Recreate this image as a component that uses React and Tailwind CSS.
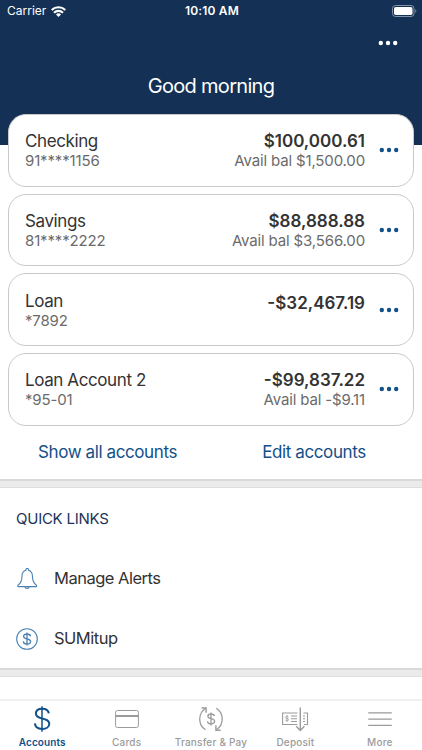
import React, { useState } from "react";

const accounts = [
  { name: "Checking", number: "91****1156", balance: "$100,000.61", avail: "Avail bal $1,500.00" },
  { name: "Savings", number: "81****2222", balance: "$88,888.88", avail: "Avail bal $3,566.00" },
  { name: "Loan", number: "*7892", balance: "-$32,467.19" },
  { name: "Loan Account 2", number: "*95-01", balance: "-$99,837.22", avail: "Avail bal -$9.11" },
];

const App = () => {
  const [activeTab, setActiveTab] = useState("Accounts");

  const tabs = [
    { label: "Accounts", icon: <DollarIcon /> },
    { label: "Cards", icon: <CardIcon /> },
    { label: "Transfer & Pay", icon: <TransferIcon /> },
    { label: "Deposit", icon: <DepositIcon /> },
    { label: "More", icon: <MenuIcon /> },
  ];

  return (
    <div className="flex h-[750px] w-[422px] flex-col overflow-hidden bg-white font-[Inter,sans-serif] text-[#333333]">
      <header className="h-[145px] shrink-0 bg-[#143055] text-white">
        <StatusBar />
        <div className="flex h-[42px] items-center justify-end pr-[24.5px]">
          <Dots />
        </div>
        <h1 className="text-center text-[20px] leading-[44px] tracking-[-0.7px]">
          Good morning
        </h1>
      </header>

      <main className="-mt-[31px] min-h-0 flex-1 overflow-hidden">
        <div className="flex flex-col gap-[7.2px] px-2">
          {accounts.map((account) => (
            <AccountCard key={account.name} {...account} />
          ))}
        </div>

        <div className="flex h-[53px] items-center pt-0.5 text-[17px] tracking-[-0.4px] text-[#125089]">
          <button className="w-[215px]">Show all accounts</button>
          <button className="w-[198px]">Edit accounts</button>
        </div>

        <Divider />

        <section className="h-[180px] pt-4">
          <h2 className="mb-[15px] px-4 text-[15px] leading-[30px] tracking-[-0.25px] text-[#1c3557]">
            QUICK LINKS
          </h2>
          <QuickLink icon={<BellIcon />} label="Manage Alerts" />
          <QuickLink icon={<CoinIcon />} label="SUMitup" />
        </section>

        <Divider />
      </main>

      <nav className="flex h-[51px] shrink-0 border-t-2 border-[#f1f1f1] bg-white">
        {tabs.map((tab) => (
          <button
            key={tab.label}
            onClick={() => setActiveTab(tab.label)}
            className={`flex flex-1 flex-col items-center whitespace-nowrap pt-[3px] text-[10px] ${
              activeTab === tab.label
                ? "font-semibold tracking-[0.1px] text-[#125089]"
                : "font-medium tracking-[0.2px] text-[#9b9b9b]"
            }`}
          >
            {tab.icon}
            <span className="mt-px leading-[14px]">{tab.label}</span>
          </button>
        ))}
      </nav>
    </div>
  );
};

const StatusBar = () => (
  <div className="grid h-[22px] grid-cols-3 items-center pr-[5px] pl-[7px] text-[12px]">
    <div className="flex items-center gap-[5px]">
      <span>Carrier</span>
      <svg width="15" height="11" viewBox="0 0 15 11" fill="none" stroke="currentColor" strokeWidth="2.1">
        <path d="M0.7 4a9.7 9.7 0 0 1 13.6 0" />
        <path d="M3 6.7a6.4 6.4 0 0 1 9 0" />
        <path d="M7.5 11 5 8.5a3.6 3.6 0 0 1 5 0z" fill="currentColor" stroke="none" />
      </svg>
    </div>
    <span className="text-center font-semibold tracking-[0.15px]">10:10 AM</span>
    <svg className="justify-self-end" width="25" height="12" viewBox="0 0 25 12" fill="none">
      <rect x="0.5" y="0.5" width="21.5" height="11" rx="3" stroke="#8493a8" />
      <rect x="2" y="2" width="18.5" height="8" rx="1.7" fill="white" />
      <path d="M23.3 4.2v3.6c1.4-.7 1.4-2.9 0-3.6z" fill="#8493a8" />
    </svg>
  </div>
);

const Dots = () => (
  <svg width="20" height="6" viewBox="0 0 20 6" fill="currentColor">
    <circle cx="2.8" cy="3" r="2.2" />
    <circle cx="10" cy="3" r="2.2" />
    <circle cx="17.2" cy="3" r="2.2" />
  </svg>
);

const AccountCard = ({ name, number, balance, avail }) => (
  <div className="flex h-[72.5px] items-center rounded-[18px] border border-[#c9c9c9] bg-white pr-3.5 pl-4">
    <div className="flex-1 pt-px">
      <div className="text-[17px] leading-5 tracking-[-0.4px]">{name}</div>
      <div className="text-[15px] leading-[19px] tracking-[-0.15px] text-[#6b6b6b]">{number}</div>
    </div>
    <div className={`pt-px text-right ${avail ? "" : "pb-3.5"}`}>
      <div className="text-[17px] leading-5 font-semibold">{balance}</div>
      {avail && (
        <div className="text-[15px] leading-[19px] tracking-[-0.15px] text-[#6b6b6b]">{avail}</div>
      )}
    </div>
    <button className="ml-[14px] text-[#125089]">
      <Dots />
    </button>
  </div>
);

const Divider = () => (
  <div className="h-[9px] border-t-2 border-b border-t-[#d9d9d9] border-b-[#dedede] bg-[#ebebeb]" />
);

const QuickLink = ({ icon, label }) => (
  <button className="flex h-[60px] w-full items-center gap-4 pl-4 text-left text-[16.5px] tracking-[-0.5px]">
    {icon}
    <span>{label}</span>
  </button>
);

const BellIcon = () => (
  <svg width="22" height="22" viewBox="0 0 22 22" fill="none" stroke="#4a82b4" strokeWidth="1.1" strokeLinejoin="round">
    <path d="M10 2.2a1.3 1.3 0 1 1 2.4 0c2.8.8 4 3 4 5.8 0 5 .8 7.2 4.1 9.3v1.3H1.9v-1.3C5.2 15.2 6 13 6 8c0-2.8 1.200-5 4-5.800z" />
    <path d="M9 18.6c.2 2.4 4.1 2.4 4.3 0" />
  </svg>
);

const CoinIcon = () => (
  <svg width="22" height="22" viewBox="0 0 22 22" fill="none" stroke="#4a82b4" strokeWidth="1.1">
    <circle cx="11" cy="11" r="10.3" />
    <path d="M11 4.4v13.2M14.500 8.300c-.2-1.500-1.500-2.300-3.500-2.300s-3.400.9-3.400 2.400c0 1.600 1.600 2 3.400 2.500 2 .5 3.600.9 3.600 2.600 0 1.500-1.600 2.500-3.600 2.500s-3.600-.9-3.700-2.600" strokeWidth="1.3" />
  </svg>
);

const DollarIcon = () => (
  <svg width="28" height="30" viewBox="0 0 28 30" fill="none" stroke="currentColor" strokeWidth="2">
    <path d="M14 2.3v25.4" strokeWidth="1.5" />
    <path d="M20.8 9.4c-.3-3-3-4.700-6.600-4.700-3.700 0-6.300 1.800-6.300 4.800 0 3.300 3 4.200 6.200 4.900 3.800.9 7.200 1.800 7.200 5.300 0 3.200-3 5.200-7 5.200s-7.200-1.900-7.400-5.500" />
  </svg>
);

const CardIcon = () => (
  <svg width="28" height="30" viewBox="0 0 28 30" fill="none" stroke="currentColor">
    <rect x="2.6" y="6.5" width="22.8" height="17" rx="1.8" />
    <path d="M2.6 12h22.8" strokeWidth="2" />
  </svg>
);

const TransferIcon = () => (
  <svg width="28" height="30" viewBox="0 0 28 30" fill="none" stroke="currentColor" strokeWidth="1.3">
    <path d="M8.5 25.8A12.7 12.7 0 0 1 8.8 4.3M19.2 4.200A12.700 12.700 0 0 1 19.300 25.700" />
    <path d="M4.500 4h4.600v4.800M23.700 26.200h-4.800v-5" strokeWidth="1.4" />
    <path d="M14 8.500v13M17.400 12.200c-.2-1.500-1.400-2.200-3.400-2.200-1.900 0-3.100.9-3.100 2.200 0 1.500 1.200 2 3.200 2.400s3.500 1 3.500 2.700-1.400 2.500-3.500 2.500-3.500-.9-3.700-2.500" />
  </svg>
);

const DepositIcon = () => (
  <svg width="28" height="30" viewBox="0 0 28 30" fill="none" stroke="currentColor" strokeWidth="1.1">
    <path d="M16.5 20.5H1.6V9h14.9M22.5 9h4v11.5h-3.5" />
    <path d="M10 12h6M10 14.8h6M10 17.5h6M22 12h2M22 14.8h2M22 17.5h2" />
    <path d="M6 11.2v6.6M7.5 12.9c-.6-1-3-.9-3 .4 0 1.5 3.1.9 3.1 2.4 0 1.3-2.6 1.4-3.2.3" strokeWidth="0.8" />
    <path d="M19.3 3.5v23M15.2 22.3l4.1 4.1 4.1-4.1" strokeWidth="1.4" />
  </svg>
);

const MenuIcon = () => (
  <svg width="28" height="30" viewBox="0 0 28 30" fill="none" stroke="currentColor" strokeWidth="1.2">
    <path d="M2.2 8.8h23.6M2.2 15.1h23.6M2.2 21.4h23.6" />
  </svg>
);

export default App;
